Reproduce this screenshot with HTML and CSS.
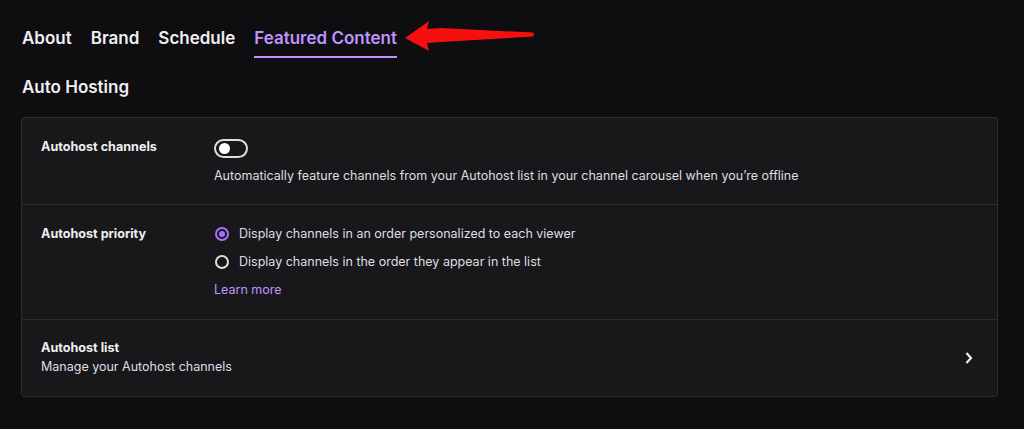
FILE: index.html
```html
<!DOCTYPE html>
<html>
<head>
<meta charset="utf-8">
<link rel="stylesheet" href="styles.css">
</head>
<body>
<div class="page">
  <nav class="tabs">
    <a class="tab">About</a>
    <a class="tab">Brand</a>
    <a class="tab">Schedule</a>
    <a class="tab active">Featured Content
      <svg class="arrow" width="130" height="34" viewBox="0 0 130 34"><path d="M0 18 L24 1 L22 9 L36 8 L128 12.5 Q130 14.5 128 16.5 L36 22 L22 23 L24 31 Z" fill="#f50f0f"/></svg>
    </a>
  </nav>
  <h2 class="section-title">Auto Hosting</h2>
  <div class="card">
    <div class="row">
      <div class="label">Autohost channels</div>
      <div class="content">
        <span class="toggle"><span class="knob"></span></span>
        <p class="desc">Automatically feature channels from your Autohost list in your channel carousel when you’re offline</p>
      </div>
    </div>
    <div class="row">
      <div class="label">Autohost priority</div>
      <div class="content radios">
        <label class="radio-line"><span class="radio checked"></span>Display channels in an order personalized to each viewer</label>
        <label class="radio-line"><span class="radio"></span>Display channels in the order they appear in the list</label>
        <a class="link">Learn more</a>
      </div>
    </div>
    <div class="row list-row">
      <div class="list-text">
        <div class="label">Autohost list</div>
        <div class="sub">Manage your Autohost channels</div>
      </div>
      <svg class="chev" width="10" height="14" viewBox="0 0 10 14"><path d="M2.5 2 L7 7 L2.5 12" fill="none" stroke="#efeff1" stroke-width="2.2"/></svg>
    </div>
  </div>
</div>
</body>
</html>
```
FILE: styles.css
```css
* { box-sizing: border-box; }
html, body { margin: 0; background: #0e0e10; }
body { font-family: Inter, "Noto Sans", sans-serif; color: #efeff1; }
.page { padding: 26px 26px 0 21px; }
.tabs { display: flex; gap: 19px; padding-left: 1px; }
.tab {
  position: relative;
  font-size: 17px; font-weight: 600; line-height: 24px;
  padding: 0 0 6px; border-bottom: 2px solid transparent;
  color: #efeff1;
}
.tab.active { color: #bf94ff; border-bottom-color: #bf94ff; }
.arrow { position: absolute; left: calc(100% + 8px); top: -6px; }
.section-title {
  margin: 17px 0 18px 1px; font-size: 17px; font-weight: 600; line-height: 24px;
  color: #efeff1;
}
.card {
  background: #18181b; border: 1px solid #2b2b30; border-radius: 3px;
}
.row {
  display: flex; padding: 20px 19px 19px; border-top: 1px solid #2b2b30;
}
.row:first-child { border-top: 0; }
.row:nth-child(2) { padding-bottom: 20px; }
.label { width: 173px; flex: none; font-size: 12.6px; font-weight: 700; line-height: 18px; }
.content { flex: 1; font-size: 12.5px; line-height: 18px; }
.toggle {
  display: block; width: 34px; height: 19px; border: 2px solid #dedee3; border-radius: 10px;
  position: relative; margin-top: 1px;
}
.knob { position: absolute; left: 2.5px; top: 2px; width: 11px; height: 11px; border-radius: 50%; background: #fff; }
.desc { margin: 9px 0 0; color: #dedee3; }
.radios { display: flex; flex-direction: column; gap: 10px; align-items: flex-start; }
.radio-line { display: flex; align-items: center; gap: 10px; color: #dedee3; margin-left: 1px; }
.radio { width: 14px; height: 14px; border-radius: 50%; border: 2px solid #dedee3; position: relative; flex: none; }
.radio.checked { border-color: #a970ff; }
.radio.checked::after { content: ""; position: absolute; inset: 2px; border-radius: 50%; background: #a970ff; }
.link { color: #bf94ff; }
.list-row { align-items: center; padding: 19px 20px 20px 19px; }
.list-text { flex: 1; }
.list-row .label { width: auto; }
.sub { font-size: 12.5px; line-height: 19px; color: #dedee3; }
.chev { margin-right: 3px; margin-top: 1px; }
```
